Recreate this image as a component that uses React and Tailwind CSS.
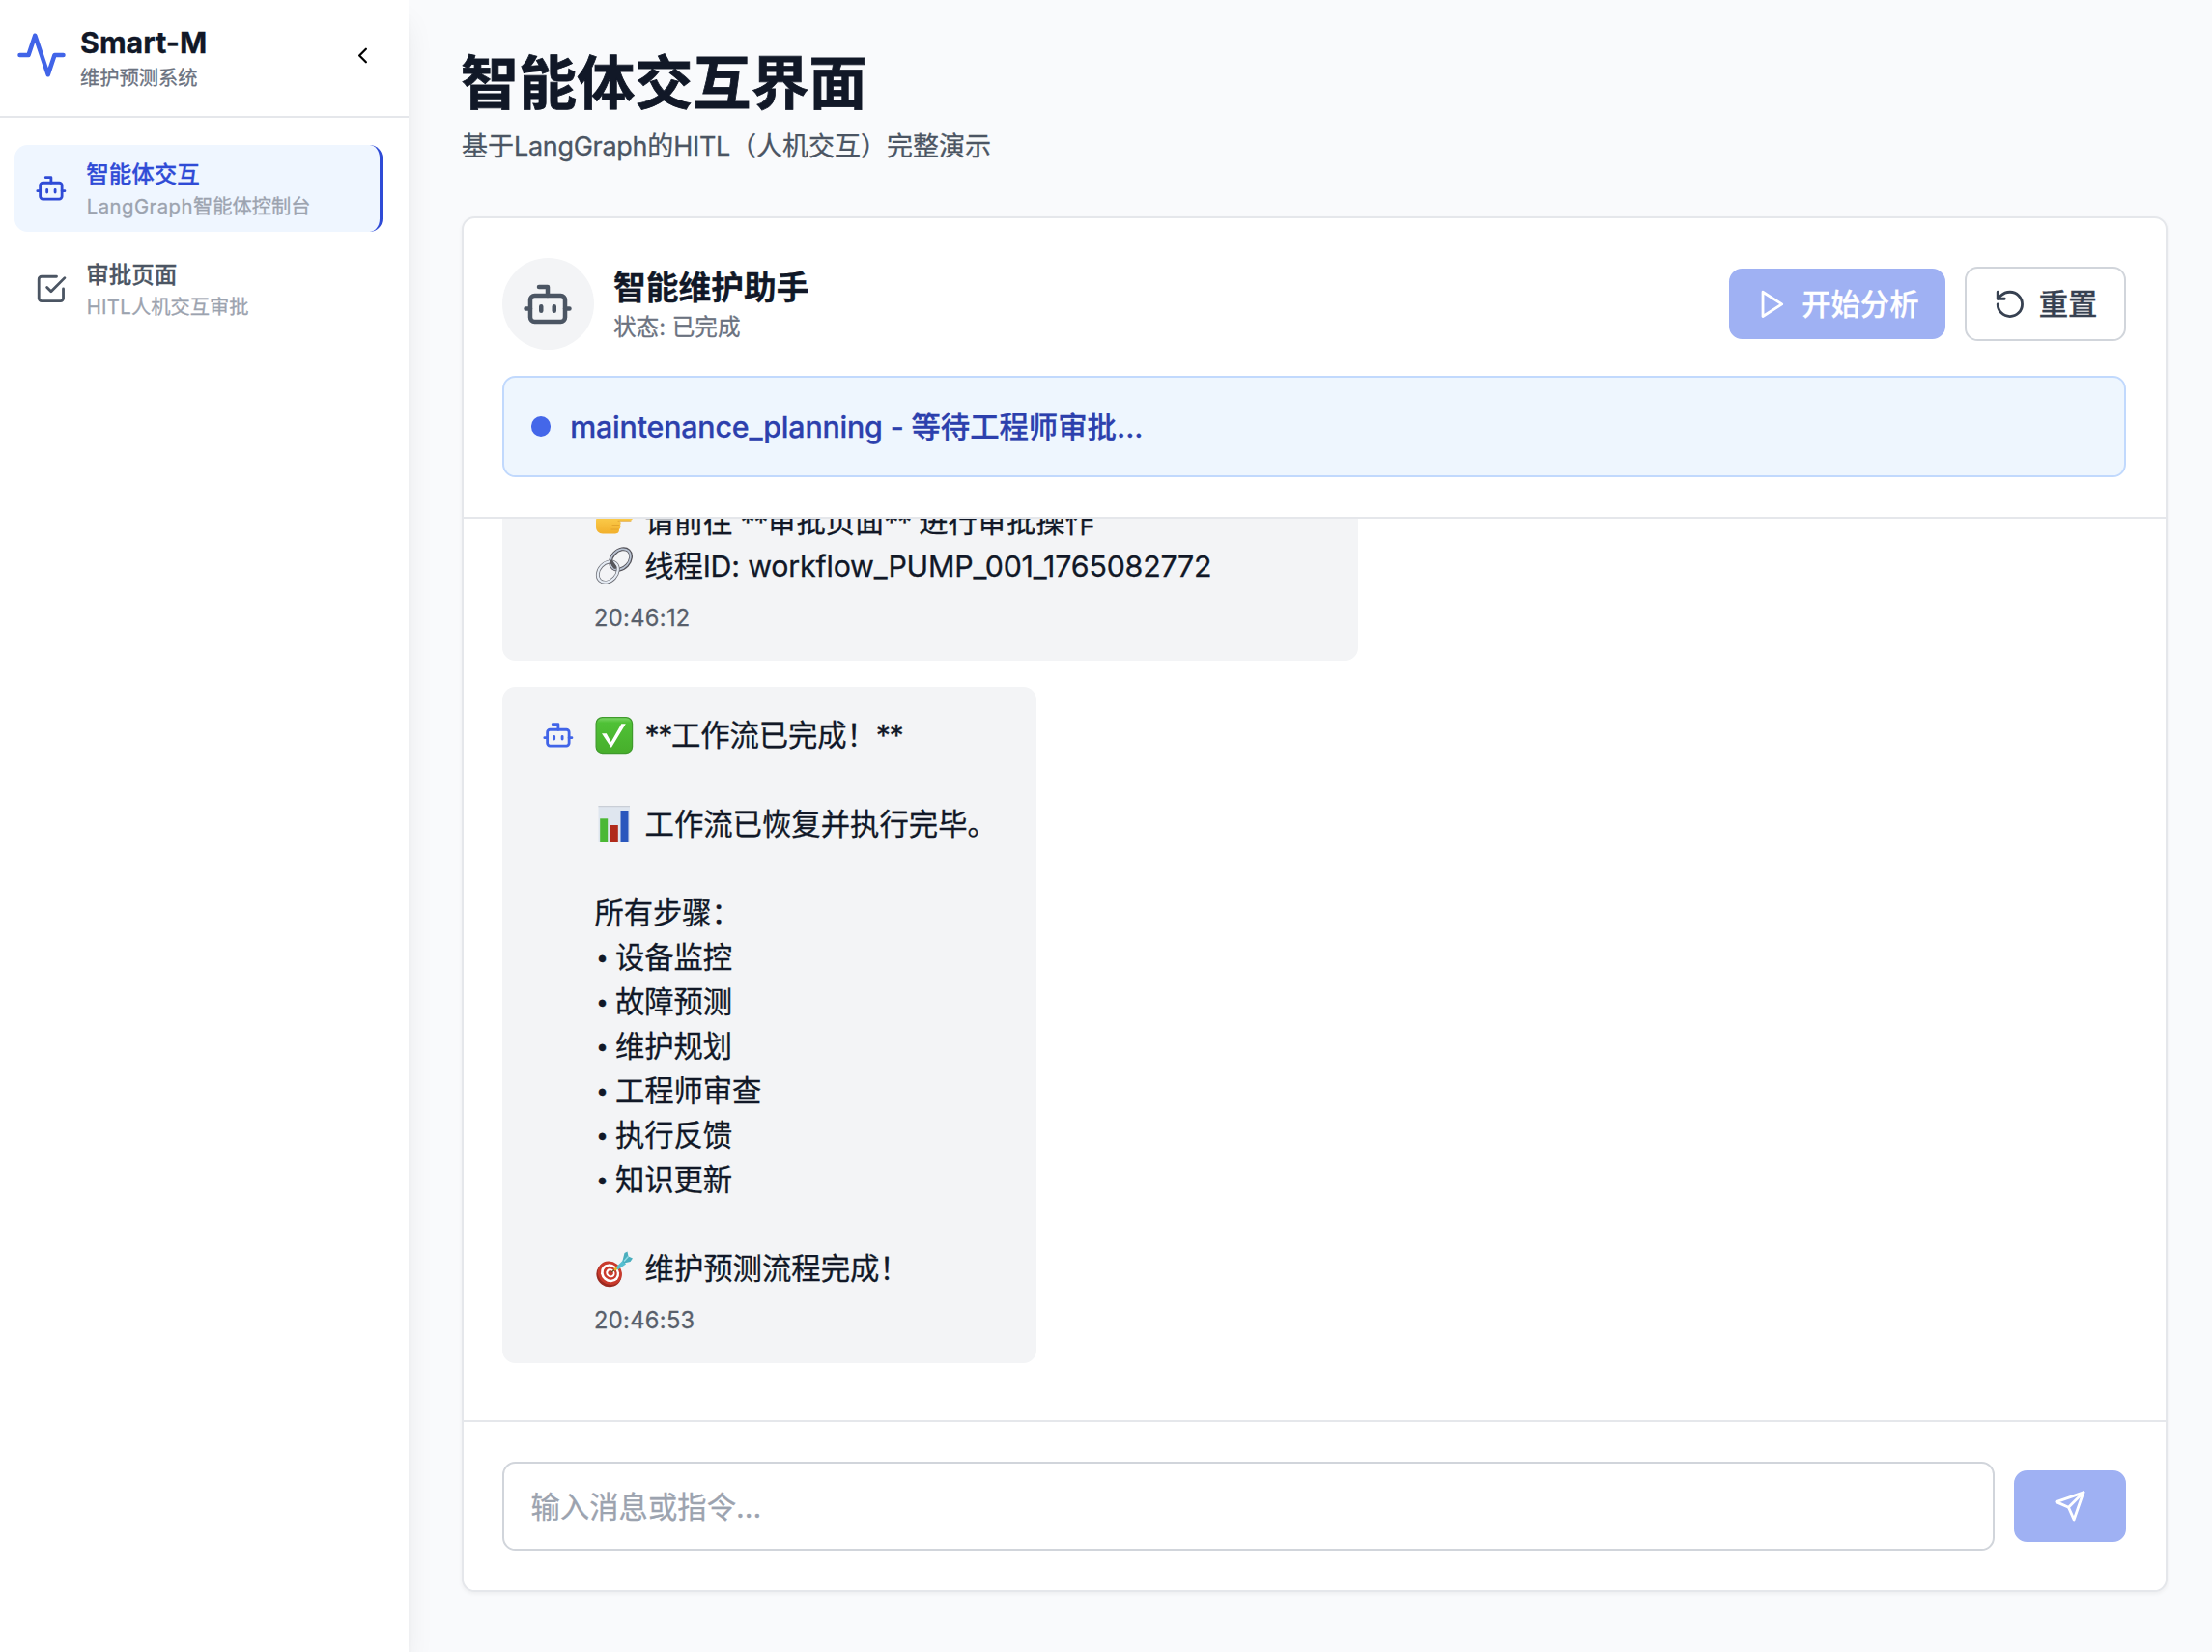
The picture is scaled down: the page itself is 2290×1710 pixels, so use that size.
import React from 'react';
import { ChevronLeft } from 'lucide-react';

function Svg({ className, children }) {
  return (
    <svg viewBox="0 0 24 24" fill="none" stroke="currentColor" strokeWidth="2" strokeLinecap="round" strokeLinejoin="round" className={className}>
      {children}
    </svg>
  );
}

const Activity = ({ className }) => (
  <Svg className={className}>
    <path d="M22 12h-4l-3 9L9 3l-3 9H2" />
  </Svg>
);

const Bot = ({ className }) => (
  <Svg className={className}>
    <path d="M12 8V4H8" />
    <rect width="16" height="12" x="4" y="8" rx="2" />
    <path d="M2 14h2M20 14h2M15 13v2M9 13v2" />
  </Svg>
);

const CheckSquare = ({ className }) => (
  <Svg className={className}>
    <path d="m9 11 3 3L22 4" />
    <path d="M21 12v7a2 2 0 0 1-2 2H5a2 2 0 0 1-2-2V5a2 2 0 0 1 2-2h11" />
  </Svg>
);

const Play = ({ className }) => (
  <Svg className={className}>
    <polygon points="5 3 19 12 5 21 5 3" />
  </Svg>
);

const Reset = ({ className }) => (
  <Svg className={className}>
    <path d="M3 12a9 9 0 1 0 9-9 9.75 9.75 0 0 0-6.74 2.74L3 8" />
    <path d="M3 3v5h5" />
  </Svg>
);

const Send = ({ className }) => (
  <Svg className={className}>
    <path d="m22 2-7 20-4-9-9-4Z" />
    <path d="M22 2 11 13" />
  </Svg>
);

const emojiClass = 'ml-[1px] mr-[3px] inline-block h-[40px] w-[40px] shrink-0';

const PointEmoji = () => (
  <svg viewBox="0 0 40 40" className={emojiClass}>
    <defs>
      <linearGradient id="hand" x1="0" y1="0" x2="0" y2="1">
        <stop offset="0" stopColor="#ffd95a" />
        <stop offset="1" stopColor="#f2b02c" />
      </linearGradient>
    </defs>
    <path d="M1 19c0-4 4-7 9-9l5-3c2-1 4 1 2 3l-3 3h22c4 0 4 6 0 6H25c2 1 2 3 1 4 1 2 0 4-1 5 0 3-1 4-4 4.500H8c-4 0-7-3-7-7z" fill="url(#hand)" />
    <path d="M24 19.300h13M18 23.500h7M17 28h7" stroke="#dfa02a" strokeWidth="0.800" fill="none" strokeLinecap="round" />
  </svg>
);

const LinkEmoji = () => (
  <svg viewBox="0 0 40 40" className={emojiClass}>
    <g fill="none">
      <ellipse cx="26.600" cy="13" rx="12" ry="9" transform="rotate(-47 26.600 13)" stroke="#54535a" strokeWidth="3.800" />
      <ellipse cx="26.300" cy="13" rx="12" ry="9" transform="rotate(-47 26.300 13)" stroke="#b9c3d2" strokeWidth="1.700" />
      <ellipse cx="13.300" cy="26.200" rx="12" ry="9" transform="rotate(-47 13.300 26.200)" stroke="#6f7178" strokeWidth="3.800" />
      <ellipse cx="13.300" cy="26" rx="12" ry="9" transform="rotate(-47 13.300 26)" stroke="#e6ecf4" strokeWidth="2.200" />
      <path d="M17 15.500 20.500 21" stroke="#55565c" strokeWidth="3.500" strokeLinecap="round" />
    </g>
  </svg>
);

const CheckEmoji = () => (
  <svg viewBox="0 0 40 40" className={emojiClass}>
    <defs>
      <linearGradient id="tick" x1="0" y1="0" x2="0" y2="1">
        <stop offset="0" stopColor="#7fd86a" />
        <stop offset="0.15" stopColor="#4fc136" />
        <stop offset="1" stopColor="#47ae2b" />
      </linearGradient>
    </defs>
    <rect x="1.100" y="1.600" width="37.500" height="37" rx="6.500" fill="url(#tick)" stroke="#3f9a2c" strokeWidth="1.200" />
    <path d="M7 18.300h4.800l4.800 8.700L27.300 8.300h4.500L16.800 33z" fill="#fff" />
  </svg>
);

const ChartEmoji = () => (
  <svg viewBox="0 0 40 40" className={emojiClass}>
    <rect x="3.500" y="1" width="32.500" height="38" fill="#dfe6ef" />
    <path d="M3.500 1.600H36" stroke="#c9ced6" strokeWidth="1.200" />
    <rect x="5.200" y="14.300" width="8" height="24.700" fill="#4ab834" />
    <rect x="15.600" y="21" width="8.200" height="18" fill="#b02a1a" />
    <rect x="26.500" y="6" width="8" height="33" fill="#2a57bd" />
  </svg>
);

const TargetEmoji = () => (
  <svg viewBox="0 0 40 40" className={emojiClass}>
    <ellipse cx="14.500" cy="26.300" rx="13.300" ry="12.700" transform="rotate(35 14.500 26.300)" fill="#9c2a20" />
    <ellipse cx="15.300" cy="24.800" rx="13" ry="11.800" transform="rotate(40 15.300 24.800)" fill="#c93a2c" />
    <ellipse cx="15.500" cy="24.800" rx="10" ry="9" transform="rotate(40 15.500 24.800)" fill="#fff" />
    <ellipse cx="15.700" cy="24.800" rx="7.400" ry="6.600" transform="rotate(40 15.700 24.800)" fill="#c93a2c" />
    <ellipse cx="15.900" cy="24.800" rx="4.900" ry="4.300" transform="rotate(40 15.900 24.800)" fill="#fff" />
    <ellipse cx="16.100" cy="24.800" rx="2.800" ry="2.500" transform="rotate(40 16.100 24.800)" fill="#c93a2c" />
    <path d="m17 24 4.500-3.500" stroke="#6b4c22" strokeWidth="1.500" />
    <path d="m19.500 20.500 3-3 2 3-4.500 2z" fill="#e9b321" />
    <path d="m22 18.500 7-7 3 4-8.500 6z" fill="#55bfd0" />
    <path d="m28.500 12 2-8 3-1.500 1 5 4.500 2-2.500 3.500-6.500 1.500z" fill="#4aaebe" />
    <path d="m30 12.500 4.500-5" stroke="#92dfe8" strokeWidth="1.300" />
  </svg>
);

function NavItem({ icon, title, sub, active }) {
  return (
    <a
      className={
        active
          ? 'flex h-[90px] items-center gap-[20px] rounded-[13.5px] border-r-[3px] border-[#2f4bd6] bg-[#eff6ff] pl-[21px] text-[#2f4bd6]'
          : 'flex h-[90px] items-center gap-[20px] rounded-[13.5px] pl-[21px] text-[#4b5563]'
      }
    >
      {icon}
      <div>
        <div className="ml-[-0.5px] text-[23.5px] leading-[33.75px] font-medium">{title}</div>
        <div className="mt-[3px] mb-[-1px] text-[20.25px] leading-[27px] text-[#9ca3af]">{sub}</div>
      </div>
    </a>
  );
}

function Line({ emoji, children }) {
  return (
    <div className="flex h-[46px] items-center tracking-[-0.12px] whitespace-pre">
      {emoji}
      {children}
    </div>
  );
}

const Stars = () => <span className="tracking-[-1.4px]">**</span>;

function Message({ className, icon, time, children }) {
  return (
    <div className={className}>
      <div className="flex gap-[20.25px]">
        <div className="flex h-[46px] w-[33.75px] shrink-0 items-center text-[#4164e8]">{icon}</div>
        <div>
          <div className="text-[30.375px] leading-[46px] text-[#111827]">{children}</div>
          <div className="mt-[14px] text-[23.625px] leading-[33.75px] tracking-[0.35px] text-[#585f6b]">{time}</div>
        </div>
      </div>
    </div>
  );
}

const steps = ['设备监控', '故障预测', '维护规划', '工程师审查', '执行反馈', '知识更新'];

export default function App() {
  return (
    <div className="flex h-[1710px] w-[2290px] overflow-hidden bg-[#f9fafc] font-['Inter','Noto_Sans_CJK_SC',sans-serif] text-[#111827] [-webkit-text-stroke-width:0.3px]">
      <aside className="z-10 w-[423px] shrink-0 bg-white shadow-[0_20px_30px_-6px_rgba(0,0,0,0.1),0_8px_12px_-8px_rgba(0,0,0,0.1)]">
        <div className="flex h-[122px] items-center border-b-2 border-[#e5e7eb] pr-[34px] pl-[16px]">
          <Activity className="mt-[-6px] h-[54px] w-[54px] text-[#4164e8]" />
          <div className="ml-[13px] flex-1">
            <h1 className="mt-[-3px] text-[30.375px] leading-[40px] font-bold">Smart-M</h1>
            <p className="mt-[3px] text-[20.25px] leading-[27px] text-[#6b7280]">维护预测系统</p>
          </div>
          <ChevronLeft className="mt-[-5px] h-[27px] w-[27px] text-black" strokeWidth={2} />
        </div>
        <nav className="mt-[28px] mr-[27px] ml-[15px] flex flex-col gap-[14px]">
          <NavItem
            active
            icon={<Bot className="h-[33.75px] w-[33.75px]" />}
            title="智能体交互"
            sub={<><span className="tracking-[0.5px]">LangGraph</span>智能体控制台</>}
          />
          <NavItem
            icon={<CheckSquare className="h-[33.75px] w-[33.75px]" />}
            title="审批页面"
            sub={<><span className="tracking-[0.3px]">HITL</span>人机交互审批</>}
          />
        </nav>
      </aside>

      <main className="flex flex-1 flex-col pr-[46px] pb-[62px] pl-[55px]">
        <header className="h-[224px] pt-[52px]">
          <h1 className="ml-[-1px] text-[60.1px] leading-[68px] font-bold [-webkit-text-stroke-width:0.8px]">智能体交互界面</h1>
          <p className="mt-[11.5px] text-[27px] leading-[40px] text-[#4b5563]">
            基于<span className="tracking-[-0.3px]">LangGraph</span>的<span className="tracking-[-0.3px]">HITL</span>（人机交互）完整演示
          </p>
        </header>

        <section className="flex flex-1 flex-col overflow-hidden rounded-[13.5px] border-2 border-[#e5e7eb] bg-white shadow-[0_2px_4px_rgba(0,0,0,0.05)]">
          <div className="h-[311px] shrink-0 border-b-2 border-[#e5e7eb] pt-[41px] pr-[41px] pl-[40px]">
            <div className="flex h-[95px] items-center">
              <div className="flex h-[95px] w-[95px] items-center justify-center rounded-full bg-[#f3f4f6] pr-[1px] text-[#4b5563]">
                <Bot className="h-[54px] w-[54px]" />
              </div>
              <div className="ml-[20px] flex-1">
                <h2 className="text-[33.75px] leading-[47px] font-semibold">智能维护助手</h2>
                <p className="mt-[1px] mb-[-1px] text-[23.625px] leading-[34px] text-[#6b7280]">状态: 已完成</p>
              </div>
              <div className="flex items-center gap-[20px] text-[30.375px] leading-[46px] font-medium">
                <button className="flex h-[73px] w-[224px] items-center justify-center gap-[13px] rounded-[13.5px] bg-[#9fb1f3] pl-[1px] text-white">
                  <Play className="h-[33.75px] w-[33.75px]" />
                  <span>开始分析</span>
                </button>
                <button className="flex h-[77px] w-[167px] items-center justify-center gap-[13.5px] rounded-[13.5px] border-2 border-[#d1d5db] bg-white text-[#374151]">
                  <Reset className="h-[33.75px] w-[33.75px]" />
                  <span>重置</span>
                </button>
              </div>
            </div>
            <div className="mt-[27px] flex h-[105px] items-center gap-[20px] rounded-[13.5px] border-2 border-[#c1d9fd] bg-[#eef6fe] pl-[28px] text-[30.375px] leading-[46px] font-medium text-[#2c40ad]">
              <span className="h-[20.25px] w-[20.25px] rounded-full bg-[#4467e9]" />
              <span><span className="tracking-[-0.18px]">maintenance_planning - </span>等待工程师审批...</span>
            </div>
          </div>

          <div className="flex min-h-0 flex-1 flex-col justify-end gap-[27px] overflow-hidden px-[40px] pb-[59px]">
            <Message className="h-[194px] w-[886px] shrink-0 rounded-[13.5px] bg-[#f3f4f6] py-[27px] pl-[41px]" time="20:46:12">
              <Line emoji={<PointEmoji />}><span> 请前往 <Stars />审批页面<Stars /> 进行审批操作</span></Line>
              <Line emoji={<LinkEmoji />}><span className="tracking-[-0.2px]"> 线程ID: workflow_PUMP_001_1765082772</span></Line>
            </Message>
            <Message
              className="h-[700px] w-[553px] shrink-0 rounded-[13.5px] bg-[#f3f4f6] py-[27px] pl-[41px]"
              icon={<Bot className="h-[33.75px] w-[33.75px]" />}
              time="20:46:53"
            >
              <Line emoji={<CheckEmoji />}><span> <Stars />工作流已完成！<Stars /></span></Line>
              <Line />
              <Line emoji={<ChartEmoji />}><span className="tracking-normal"> 工作流已恢复并执行完毕。</span></Line>
              <Line />
              <Line><span className="ml-[0.5px]">所有步骤：</span></Line>
              {steps.map((s) => (
                <Line key={s}>
                  <span className="w-[22px] pl-[2px] text-[23px]">•</span>
                  <span>{s}</span>
                </Line>
              ))}
              <Line />
              <Line emoji={<TargetEmoji />}><span className="tracking-normal"> 维护预测流程完成！</span></Line>
            </Message>
          </div>

          <div className="flex h-[176px] shrink-0 items-center gap-[20px] border-t-2 border-[#e5e7eb] pr-[41px] pl-[40px]">
            <input
              className="h-[92px] flex-1 rounded-[13.5px] border-2 border-[#d1d5db] bg-white px-[27.5px] pt-[2px] text-[30.375px] placeholder:text-[#9ca3af]"
              placeholder="输入消息或指令..."
            />
            <button className="flex h-[74px] w-[116px] items-center justify-center rounded-[13.5px] bg-[#9fb1f3] text-white">
              <Send className="h-[33.75px] w-[33.75px]" />
            </button>
          </div>
        </section>
      </main>
    </div>
  );
}
